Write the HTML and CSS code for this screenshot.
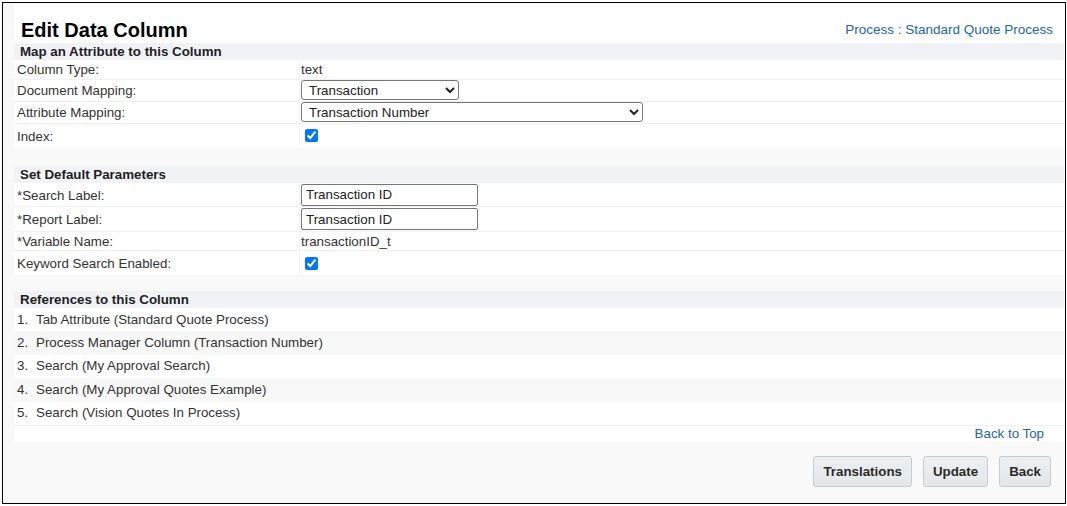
FILE: index.html
```html
<!DOCTYPE html>
<html>
<head>
<meta charset="utf-8">
<title>Edit Data Column</title>
<link rel="stylesheet" href="styles.css">
</head>
<body>
<div class="frame">
  <div class="header">
    <h1 class="title">Edit Data Column</h1>
    <a class="link process-link" href="#">Process : Standard Quote Process</a>
  </div>

  <section class="section">
    <div class="section-head">Map an Attribute to this Column</div>
    <div class="row row-text"><div class="label">Column Type:</div><div class="value text-value">text</div></div>
    <div class="row row-select"><div class="label">Document Mapping:</div><div class="value"><select class="select select-short"><option>Transaction</option></select></div></div>
    <div class="row row-select"><div class="label">Attribute Mapping:</div><div class="value"><select class="select select-long"><option>Transaction Number</option></select></div></div>
    <div class="row row-check last"><div class="label">Index:</div><div class="value"><input class="check" type="checkbox" checked></div></div>
  </section>

  <section class="section section-2">
    <div class="section-head">Set Default Parameters</div>
    <div class="row row-input"><div class="label">*Search Label:</div><div class="value"><input class="text-input" type="text" value="Transaction ID"></div></div>
    <div class="row row-input"><div class="label">*Report Label:</div><div class="value"><input class="text-input" type="text" value="Transaction ID"></div></div>
    <div class="row row-text"><div class="label">*Variable Name:</div><div class="value text-value">transactionID_t</div></div>
    <div class="row row-check last"><div class="label">Keyword Search Enabled:</div><div class="value"><input class="check" type="checkbox" checked></div></div>
  </section>

  <section class="section section-3">
    <div class="section-head">References to this Column</div>
    <div class="ref"><span class="num">1.</span>Tab Attribute (Standard Quote Process)</div>
    <div class="ref alt"><span class="num">2.</span>Process Manager Column (Transaction Number)</div>
    <div class="ref"><span class="num">3.</span>Search (My Approval Search)</div>
    <div class="ref alt"><span class="num">4.</span>Search (My Approval Quotes Example)</div>
    <div class="ref"><span class="num">5.</span>Search (Vision Quotes In Process)</div>
    <div class="back-row"><a class="link" href="#">Back to Top</a></div>
  </section>

  <div class="footer">
    <button class="btn" type="button">Translations</button>
    <button class="btn" type="button">Update</button>
    <button class="btn" type="button">Back</button>
  </div>
</div>
</body>
</html>
```

FILE: styles.css
```css
* { box-sizing: border-box; }

html, body {
  margin: 0;
  padding: 0;
  background: #ffffff;
}

body {
  font-family: "Liberation Sans", Arial, sans-serif;
  font-size: 13.333px;
  color: #333333;
}

.frame {
  margin: 2px;
  width: 1064px;
  height: 502px;
  border: 1px solid #000000;
  background: #f9f9f9;
  padding: 0 1px 0 11px;
  display: flex;
  flex-direction: column;
  overflow: hidden;
}

.header {
  height: 40px;
  background: #ffffff;
  display: flex;
  justify-content: space-between;
  align-items: flex-start;
  padding: 0 11px 0 7px;
}

.title {
  margin: 16px 0 0 0;
  font-size: 20px;
  line-height: 22px;
  font-weight: bold;
  color: #000000;
}

.link {
  color: #1f64ab;
  text-decoration: none;
  line-height: 16px;
}

.process-link {
  margin-top: 19px;
  font-size: 13.5px;
}

.section {
  background: #ffffff;
}

.section-2 { margin-top: 18px; }
.section-3 { margin-top: 16px; }

.section-head {
  height: 17px;
  line-height: 17px;
  background: #f1f2f6;
  font-weight: bold;
  color: #222222;
  padding-left: 6px;
}

.row {
  display: grid;
  grid-template-columns: 286px 1fr;
  align-items: stretch;
  border-bottom: 1px solid #f1f1f1;
}

.row.last { border-bottom: 0; }

.row-text { height: 19.5px; }
.row-select { height: 22px; }
.row-input { height: 24.5px; padding-top: 1px; }
.row-check { height: 24px; }

.label {
  display: flex;
  align-items: center;
  padding: 2px 0 0 3px;
  border-right: 1px solid #f4f4f4;
  line-height: 16px;
}

.value {
  display: flex;
  align-items: center;
  padding-left: 1px;
  line-height: 16px;
}

.text-value {
  padding-top: 2px;
}

.select {
  font-family: "Liberation Sans", Arial, sans-serif;
  font-size: 13.333px;
  color: #222222;
  height: 20px;
  padding: 0 0 0 3px;
  border: 1px solid #767676;
  border-radius: 3px;
  background: #ffffff;
}

.select-short { width: 158px; }
.select-long { width: 342px; }

.text-input {
  font-family: "Liberation Sans", Arial, sans-serif;
  font-size: 13.333px;
  color: #222222;
  width: 177px;
  height: 22px;
  padding: 0 4px;
  border: 1px solid #767676;
  border-radius: 2px;
  background: #ffffff;
}

.check {
  margin: 0 0 0 4px;
  width: 13px;
  height: 13px;
  accent-color: #0075ff;
}

.ref {
  height: 23.4px;
  display: flex;
  align-items: center;
  padding-left: 3px;
  line-height: 16px;
}

.ref.alt { background: #f8f8f8; }

.num {
  display: inline-block;
  width: 19px;
}

.back-row {
  border-top: 1px solid #f1f1f1;
  height: 17px;
  display: flex;
  justify-content: flex-end;
  align-items: center;
  padding-right: 20px;
}

.footer {
  flex: 1;
  display: flex;
  justify-content: flex-end;
  align-items: flex-start;
  gap: 11px;
  padding: 14px 13px 0 0;
}

.btn {
  height: 31px;
  padding: 0 9px;
  font-family: "Liberation Sans", Arial, sans-serif;
  font-size: 13.333px;
  font-weight: bold;
  color: #2b2b2b;
  background: linear-gradient(#edf0f2, #e3e7ea);
  border: 1px solid #c4ccd3;
  border-radius: 3px;
}
```
